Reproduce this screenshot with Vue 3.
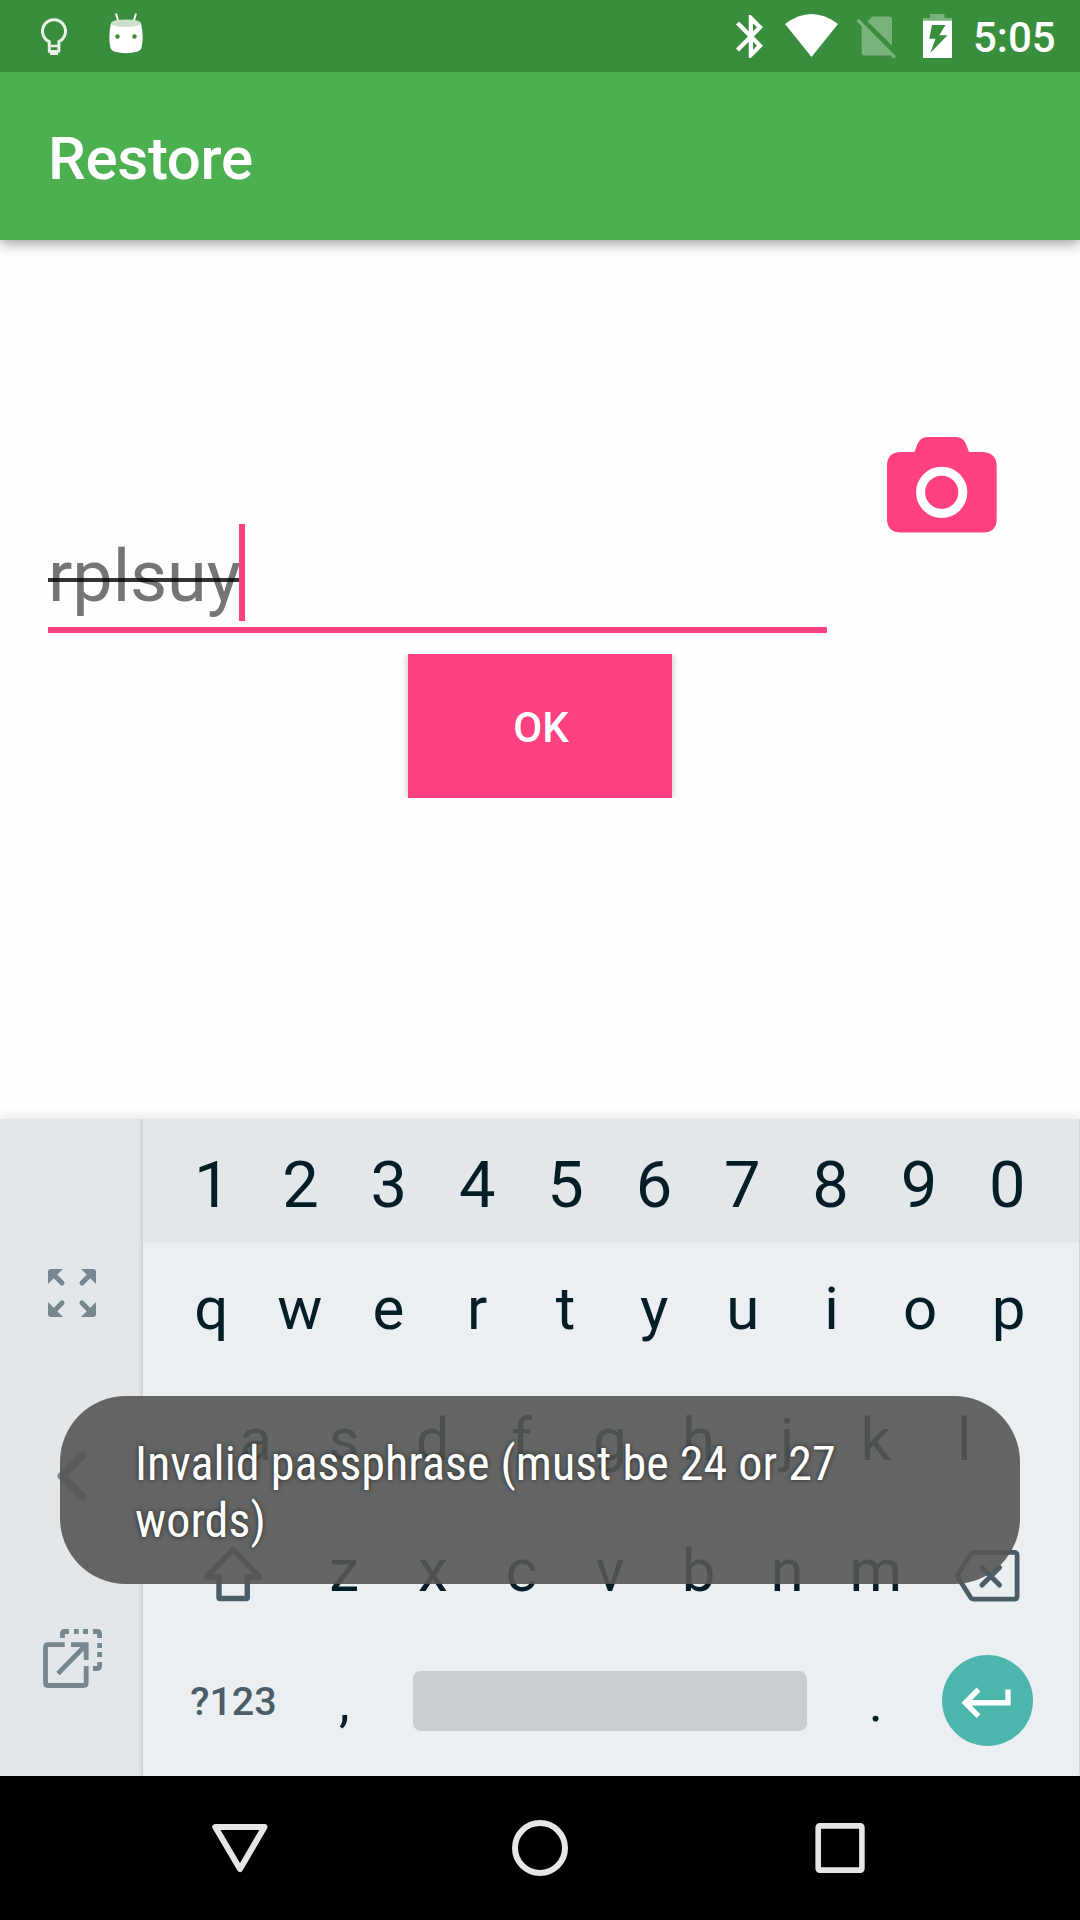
<script setup>
const digits = '1234567890'.split('')
const rowTop = 'qwertyuiop'.split('')
const rowHome = 'asdfghjkl'.split('')
const rowBottom = 'zxcvbnm'.split('')
</script>

<template>
  <div class="screen">
    <header class="status">
      <div class="status-left">
        <svg class="bulb" width="26" height="38" viewBox="41 18 26 38">
          <path d="M49.2 41.6A11.5 11.5 0 1 1 58.8 41.6M49.3 40.5V51.6M58.9 40.5V51.6" fill="none" stroke="#e8f1e8" stroke-width="3" />
          <path d="M48 44.8h12v2.4h-12zM48 50h12v2.8h-2V55h-8v-2.2h-2z" fill="#e8f1e8" />
        </svg>
        <svg class="droid" width="34" height="41" viewBox="109 12.5 34 41">
          <path d="M116.2 13.8L118.4 21M135.8 13.8L133.6 21" stroke="#fff" stroke-width="2" stroke-linecap="round" />
          <path d="M111 22.5Q108 36 110.3 46.5Q111 50.3 115 51.3Q126 54 137 51.3Q141 50.3 141.7 46.5Q144 36 141 22.5Z" fill="#fff" />
          <ellipse cx="126" cy="22.7" rx="15" ry="3.8" fill="#cbe1cc" />
          <circle cx="117.5" cy="36" r="2.2" fill="#388e3c" />
          <circle cx="134.5" cy="36" r="2.2" fill="#388e3c" />
        </svg>
      </div>
      <div class="status-right">
        <svg class="bt" width="27" height="43" viewBox="5 2 12.71 20" preserveAspectRatio="none">
          <path fill="#fff" d="M17.71 7.71L12 2h-1v7.59L6.41 5 5 6.41 10.59 12 5 17.59 6.41 19 11 14.41V22h1l5.71-5.71-4.3-4.29 4.3-4.29zM13 5.83l1.88 1.88L13 9.59V5.83zm1.88 10.46L13 18.17v-3.76l1.88 1.88z" />
        </svg>
        <svg class="wifi" width="53" height="43" viewBox="785 14 53 43">
          <path fill="#fff" d="M785 24Q811.500 4 838 24L811.500 57Z" />
        </svg>
        <svg class="sim" width="40" height="43" viewBox="856 15.500 40 43">
          <path fill="#7ab27d" d="M872.500 16H889Q892 16 892 19V45L867.500 21Z" />
          <path fill="#7ab27d" d="M861.700 24L891 53.500L889 55H865Q861.700 55 861.700 51.700Z" />
          <path d="M857.500 19.300L894.800 57" stroke="#7ab27d" stroke-width="3.300" />
        </svg>
        <svg class="battery" width="29" height="44" viewBox="923 14 29 44">
          <path fill="#7ab27d" d="M930 14h14.500v4H952v3H923v-3h7z" />
          <path fill="#fff" d="M923 20.800h29V58h-29z" />
          <path fill="#388e3c" d="M932 25H945.500L939.300 35.200H947.500L930.300 53L935.500 38.700H929.300Z" />
        </svg>
        <span class="clock">5:05</span>
      </div>
    </header>

    <div class="appbar"><h1>Restore</h1></div>

    <main class="content">
      <div class="entry">
        <div class="field"><span class="typed">rplsuy</span><i class="caret"></i></div>
        <svg class="camera" width="110" height="96" viewBox="887 437 110 96">
          <path fill="#ff4081" d="M901 452H914.500L917.500 444Q920.500 437 927.500 437H956Q963 437 966 444L969 452H983Q996.700 453 996.700 466V518.500Q996.700 532.500 983 532.500H901Q887 532.500 887 518.500V466Q887 452 901 452Z" />
          <circle cx="941.700" cy="492.300" r="21.100" fill="none" stroke="#fff" stroke-width="9" />
        </svg>
      </div>
      <button class="ok">OK</button>
    </main>

    <section class="ime">
      <aside class="side">
        <svg class="expand" width="48" height="48" viewBox="0 0 48 48">
          <defs>
            <g id="corner">
              <path fill="#78868d" d="M0 15V3Q0 0 3 0H15Z" />
              <path d="M5 5L14 14" stroke="#78868d" stroke-width="5" stroke-linecap="round" />
            </g>
          </defs>
          <use href="#corner" />
          <use href="#corner" transform="translate(48 0) scale(-1 1)" />
          <use href="#corner" transform="translate(0 48) scale(1 -1)" />
          <use href="#corner" transform="translate(48 48) scale(-1 -1)" />
        </svg>
        <svg class="chevron" width="29" height="48" viewBox="57 1452 29 48">
          <path d="M82 1456L61.500 1476L82 1496" fill="none" stroke="#78868d" stroke-width="8" stroke-linecap="round" stroke-linejoin="round" />
        </svg>
        <svg class="popout" width="59" height="59" viewBox="43 1629 59 59">
          <g fill="none" stroke="#78868d" stroke-width="4.800">
            <path d="M64.700 1644.600H48Q45.500 1644.600 45.500 1647V1683Q45.500 1685.500 48 1685.500H83.500Q86.200 1685.500 86.200 1683V1666" />
            <path d="M71 1644.600H86.200V1660M58 1673.500L85 1646" />
            <path d="M62.400 1638V1634Q62.400 1631.500 65 1631.500H69M74 1631.500H78.700M83 1631.500H88M93 1631.500H97Q99.600 1631.500 99.600 1634V1638M99.600 1643V1648M99.600 1652V1657M99.600 1662V1666Q99.600 1668.500 97 1668.500H93" />
          </g>
        </svg>
      </aside>

      <div class="keys">
        <div class="row numbers"><span v-for="k in digits" :key="k" class="key">{{ k }}</span></div>
        <div class="row"><span v-for="k in rowTop" :key="k" class="key">{{ k }}</span></div>
        <div class="row home"><span v-for="k in rowHome" :key="k" class="key">{{ k }}</span></div>
        <div class="row">
          <span class="key wide shift">
            <svg width="60" height="57" viewBox="203 1544.500 60 57">
              <path d="M233 1549L259 1575.800Q259.500 1576.500 258.500 1576.500H247.300V1597Q247.300 1598 246.300 1598H220Q219 1598 219 1597V1576.500H207.500Q206.500 1576.500 207 1575.800Z" fill="none" stroke="#4b5d66" stroke-width="5.400" stroke-linejoin="round" />
            </svg>
          </span>
          <span v-for="k in rowBottom" :key="k" class="key">{{ k }}</span>
          <span class="key wide del">
            <svg width="66" height="52" viewBox="953.500 1550 66 52">
              <path d="M956.500 1576L970.500 1553.500Q971.500 1552.400 973 1552.400H1013.500Q1016.600 1552.400 1016.600 1555.500V1596Q1016.600 1599.200 1013.500 1599.200H973Q971.500 1599.200 970.500 1598Z" fill="none" stroke="#4b5d66" stroke-width="4.800" stroke-linejoin="round" />
              <path d="M981.500 1567.500L999 1585M999 1567.500L981.500 1585" stroke="#4b5d66" stroke-width="5" stroke-linecap="round" />
            </svg>
          </span>
        </div>
        <div class="row last">
          <span class="key wide sym">?123</span>
          <span class="key punct">,</span>
          <span class="key space"><i></i></span>
          <span class="key punct">.</span>
          <span class="key wide enter">
            <b>
              <svg width="50" height="32" viewBox="961 1687.500 50 32">
                <path d="M1008 1690V1703.300H965.500M978.500 1690L965.300 1703.300L978.500 1716.600" fill="none" stroke="#fff" stroke-width="5.400" />
              </svg>
            </b>
          </span>
        </div>
      </div>
    </section>

    <nav class="navbar">
      <svg width="60" height="60" viewBox="210 1818 60 60">
        <path d="M215.300 1827H264.500L240 1869Z" fill="none" stroke="#e6e6e6" stroke-width="6" stroke-linejoin="round" />
      </svg>
      <svg width="60" height="60" viewBox="0 0 60 60">
        <circle cx="30" cy="30" r="25" fill="none" stroke="#e6e6e6" stroke-width="6" />
      </svg>
      <svg width="60" height="60" viewBox="810 1818 60 60">
        <rect x="818.200" y="1825.900" width="43.700" height="44.200" rx="1.500" fill="none" stroke="#e6e6e6" stroke-width="5.600" />
      </svg>
    </nav>

    <div class="toast"><p>Invalid passphrase (must be 24 or 27<br />words)</p></div>
  </div>
</template>

<style>
body {
  margin: 0;
}
</style>

<style scoped>
.screen {
  position: relative;
  width: 1080px;
  height: 1920px;
  overflow: hidden;
  display: flex;
  flex-direction: column;
  background: #fefefe;
  font-family: Roboto, "Liberation Sans", sans-serif;
}
svg {
  display: block;
  flex: none;
}
.status {
  position: relative;
  z-index: 1;
  height: 72px;
  display: flex;
  justify-content: space-between;
  background: #388e3c;
  box-sizing: border-box;
  padding: 0 24px 0 41px;
}
.status-left,
.status-right {
  display: flex;
  align-items: flex-start;
}
.bulb {
  margin-top: 18px;
}
.droid {
  margin: 12.5px 0 0 42px;
}
.bt {
  margin: 15px 22.500px 0 0;
}
.wifi {
  margin: 14px 18px 0 0;
}
.sim {
  margin: 15.500px 27px 0 0;
}
.battery {
  margin: 14px 21px 0 0;
}
.clock {
  width: 83px;
  font-size: 42px;
  font-weight: 500;
  line-height: 76px;
  color: #fff;
}
.appbar {
  position: relative;
  height: 168px;
  background: #4caf50;
  box-shadow: 0 4px 12px rgba(0, 0, 0, 0.35);
}
.appbar h1 {
  margin: 0;
  padding: 5px 0 0 48px;
  font-size: 60px;
  font-weight: 500;
  line-height: 163px;
  letter-spacing: -0.3px;
  color: #fff;
}
.content {
  height: 879px;
  display: flex;
  flex-direction: column;
  align-items: center;
}
.entry {
  align-self: stretch;
  display: flex;
  padding: 197px 83px 0 48px;
  justify-content: space-between;
}
.field {
  width: 779px;
  height: 97px;
  margin-top: 87px;
  padding-bottom: 6px;
  border-bottom: 6px solid #ff4081;
  display: flex;
  margin-bottom: 21px;
}
.typed {
  width: 191px;
  font-size: 72px;
  line-height: 105px;
  letter-spacing: -0.1px;
  color: #757575;
  white-space: nowrap;
  position: relative;
}
.typed::after {
  content: "";
  position: absolute;
  left: 0;
  top: 54px;
  width: 192px;
  height: 4px;
  background: rgba(0, 0, 0, 0.8);
}
.caret {
  width: 6px;
  height: 97px;
  background: #ff4081;
  position: relative;
}
.ok {
  width: 264px;
  height: 144px;
  border: 0;
  padding: 3px 0 0 2px;
  background: #ff4081;
  color: #fff;
  font: 500 42px/141px Roboto, "Liberation Sans", sans-serif;
  box-shadow: 0 0 7px rgba(0, 0, 0, 0.25);
  clip-path: inset(0 -10px);
}
.ime {
  height: 657px;
  display: flex;
  background: #e3e7ea;
  box-shadow: 0 0 12px rgba(0, 0, 0, 0.14);
}
.side {
  width: 143px;
  display: flex;
  flex-direction: column;
  align-items: center;
  background: linear-gradient(to right, transparent 138px, rgba(0, 0, 0, 0.09) 143px);
}
.expand {
  margin-top: 150px;
}
.chevron {
  margin-top: 135px;
}
.popout {
  margin: 129px 0 0 2px;
}
.keys {
  width: 936px;
  border-right: 1px solid #cfd3d6;
  border-radius: 0 0 4px 4px;
  background: #ebeff2;
}
.row {
  height: 131px;
  box-sizing: border-box;
  display: flex;
  padding: 0 26px 0 24px;
  font-size: 60px;
  color: #041e28;
}
.numbers {
  height: 124px;
  padding: 7px 27.500px 0 25px;
  font-size: 65px;
  background: #e3e7ea;
}
.home {
  padding-left: 68.300px;
  padding-right: 70.300px;
}
.last {
  height: 140px;
}
.key {
  flex: 1 1 0;
  min-width: 0;
  display: flex;
  align-items: center;
  justify-content: center;
}
.wide {
  flex-grow: 1.5;
}
.shift svg {
  margin-top: 5px;
}
.del svg {
  margin-top: 10px;
}
.sym {
  font-size: 39.500px;
  font-weight: 500;
  color: #4b5d66;
  padding-bottom: 9px;
}
.punct {
  font-size: 54px;
  padding-bottom: 7px;
}
.space {
  flex-grow: 5;
  padding-bottom: 10px;
}
.space i {
  width: 394px;
  height: 60px;
  border-radius: 8px;
  background: #c9cdd0;
}
.enter {
  padding-bottom: 11px;
}
.enter b {
  width: 91px;
  height: 91px;
  margin-left: 1px;
  border-radius: 50%;
  background: #4db6ac;
  display: flex;
  align-items: center;
  justify-content: center;
  padding: 5px 3px 0 0;
  box-sizing: border-box;
}
.navbar {
  height: 144px;
  display: flex;
  align-items: center;
  justify-content: space-between;
  box-sizing: border-box;
  padding: 0 210px;
  background: #000;
}
.toast {
  position: absolute;
  left: 60px;
  top: 1396px;
  width: 960px;
  height: 188px;
  box-sizing: border-box;
  padding: 40px 74px 0 75px;
  border-radius: 66px;
  background: rgba(85, 85, 85, 0.9);
}
.toast p {
  margin: 0;
  font-family: "Roboto Condensed", Roboto, "Liberation Sans", sans-serif;
  font-stretch: 75%;
  font-size: 48px;
  line-height: 56.500px;
  letter-spacing: 0.05px;
  color: #fff;
  white-space: nowrap;
  text-shadow: 0 0 5px rgba(0, 0, 0, 0.65);
}
</style>
